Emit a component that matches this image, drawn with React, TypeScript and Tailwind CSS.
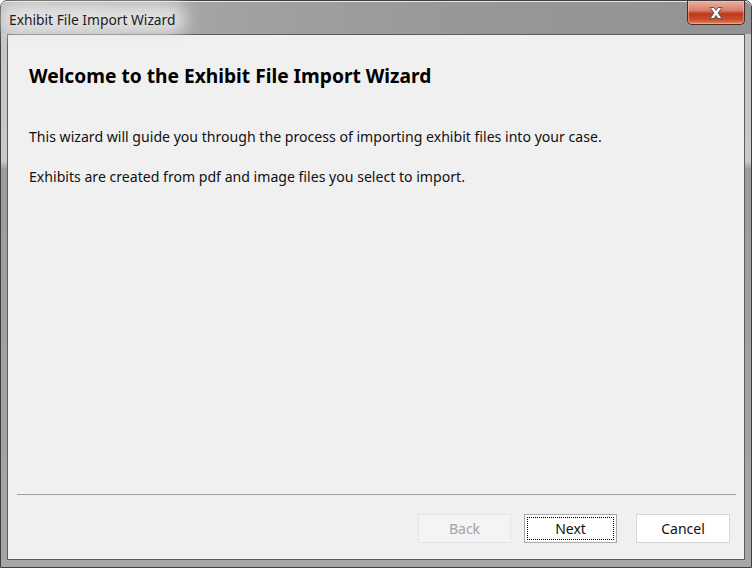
import React from "react";

function CloseX() {
  return (
    <svg width="18" height="14" viewBox="0 0 18 14">
      <path
        d="M3 1.5 H7 L9 4.5 L11 1.5 H15 L11 7 L15 12.5 H11 L9 9.5 L7 12.5 H3 L7 7 Z"
        fill="#ffffff"
        stroke="#5a5a5a"
        strokeWidth="1"
        strokeLinejoin="round"
      />
    </svg>
  );
}

export default function App() {
  const font = { fontFamily: '"Noto Sans", "Open Sans", sans-serif' };
  return (
    <div
      className="w-[752px] h-[568px] flex flex-col rounded-t-[7px] border border-[#3f3f3f] bg-[linear-gradient(180deg,#c4c4c4_0px,#c9c9c9_160px,#9c9c9c_168px,#a6a6a6_568px)]"
      style={font}
    >
      {/* title bar */}
      <div className="h-[33px] flex items-start justify-between pl-[8px] pr-[6px] rounded-t-[6px] border-t border-[#e8e8e8] bg-[linear-gradient(90deg,#b9b9b9_0%,#a2a2a2_30%,#989898_60%,#939393_100%)]">
        <div className="relative mt-[5px]">
          <div className="absolute -inset-x-[10px] -inset-y-[4px] rounded-full bg-[#e6e6e6] blur-[8px] opacity-90" />
          <span className="relative text-[13.8px] leading-[20px] text-[#1b1b1b]">
            Exhibit File Import Wizard
          </span>
        </div>
        <div className="w-[58px] h-[24px] -mt-px flex items-center justify-center rounded-b-[5px] border border-t-0 border-[#4a2a22] bg-[linear-gradient(180deg,#eab0a0_0%,#d9826c_40%,#c0391f_55%,#c84c2c_80%,#e08a60_100%)] shadow-[inset_0_0_0_1px_rgba(255,200,180,0.5)]">
          <CloseX />
        </div>
      </div>

      {/* client area */}
      <div className="flex-1 mx-[6px] mb-[7px] border border-[#5c5c5c] bg-[#f0f0f0] flex flex-col">
        <div className="flex-1 pl-[21px] pt-[28px]">
          <div className="text-[19.2px] leading-[26px] font-bold text-black">
            Welcome to the Exhibit File Import Wizard
          </div>
          <div className="mt-[38px] text-[14.1px] leading-[20px] text-[#111]">
            This wizard will guide you through the process of importing exhibit files into your case.
          </div>
          <div className="mt-[20px] text-[14.1px] leading-[20px] text-[#111]">
            Exhibits are created from pdf and image files you select to import.
          </div>
        </div>
        <div className="ml-[9px] mr-[8px] h-px bg-[#a0a0a0]" />
        <div className="h-[64px] flex items-start justify-end pt-[19px] pr-[14px]">
          <div className="w-[93px] h-[29px] flex items-center justify-center bg-[#f4f4f4] border border-[#e4e4e4] text-[14px] text-[#a3a3a3]">
            Back
          </div>
          <div className="ml-[13px] w-[93px] h-[29px] p-[2px] bg-white border border-[#a8a8a8]">
            <div className="w-full h-full flex items-center justify-center border border-dotted border-black text-[14px] text-[#111]">
              Next
            </div>
          </div>
          <div className="ml-[19px] w-[94px] h-[29px] flex items-center justify-center bg-white border border-[#d6d6d6] text-[14px] text-[#111]">
            Cancel
          </div>
        </div>
      </div>
    </div>
  );
}
